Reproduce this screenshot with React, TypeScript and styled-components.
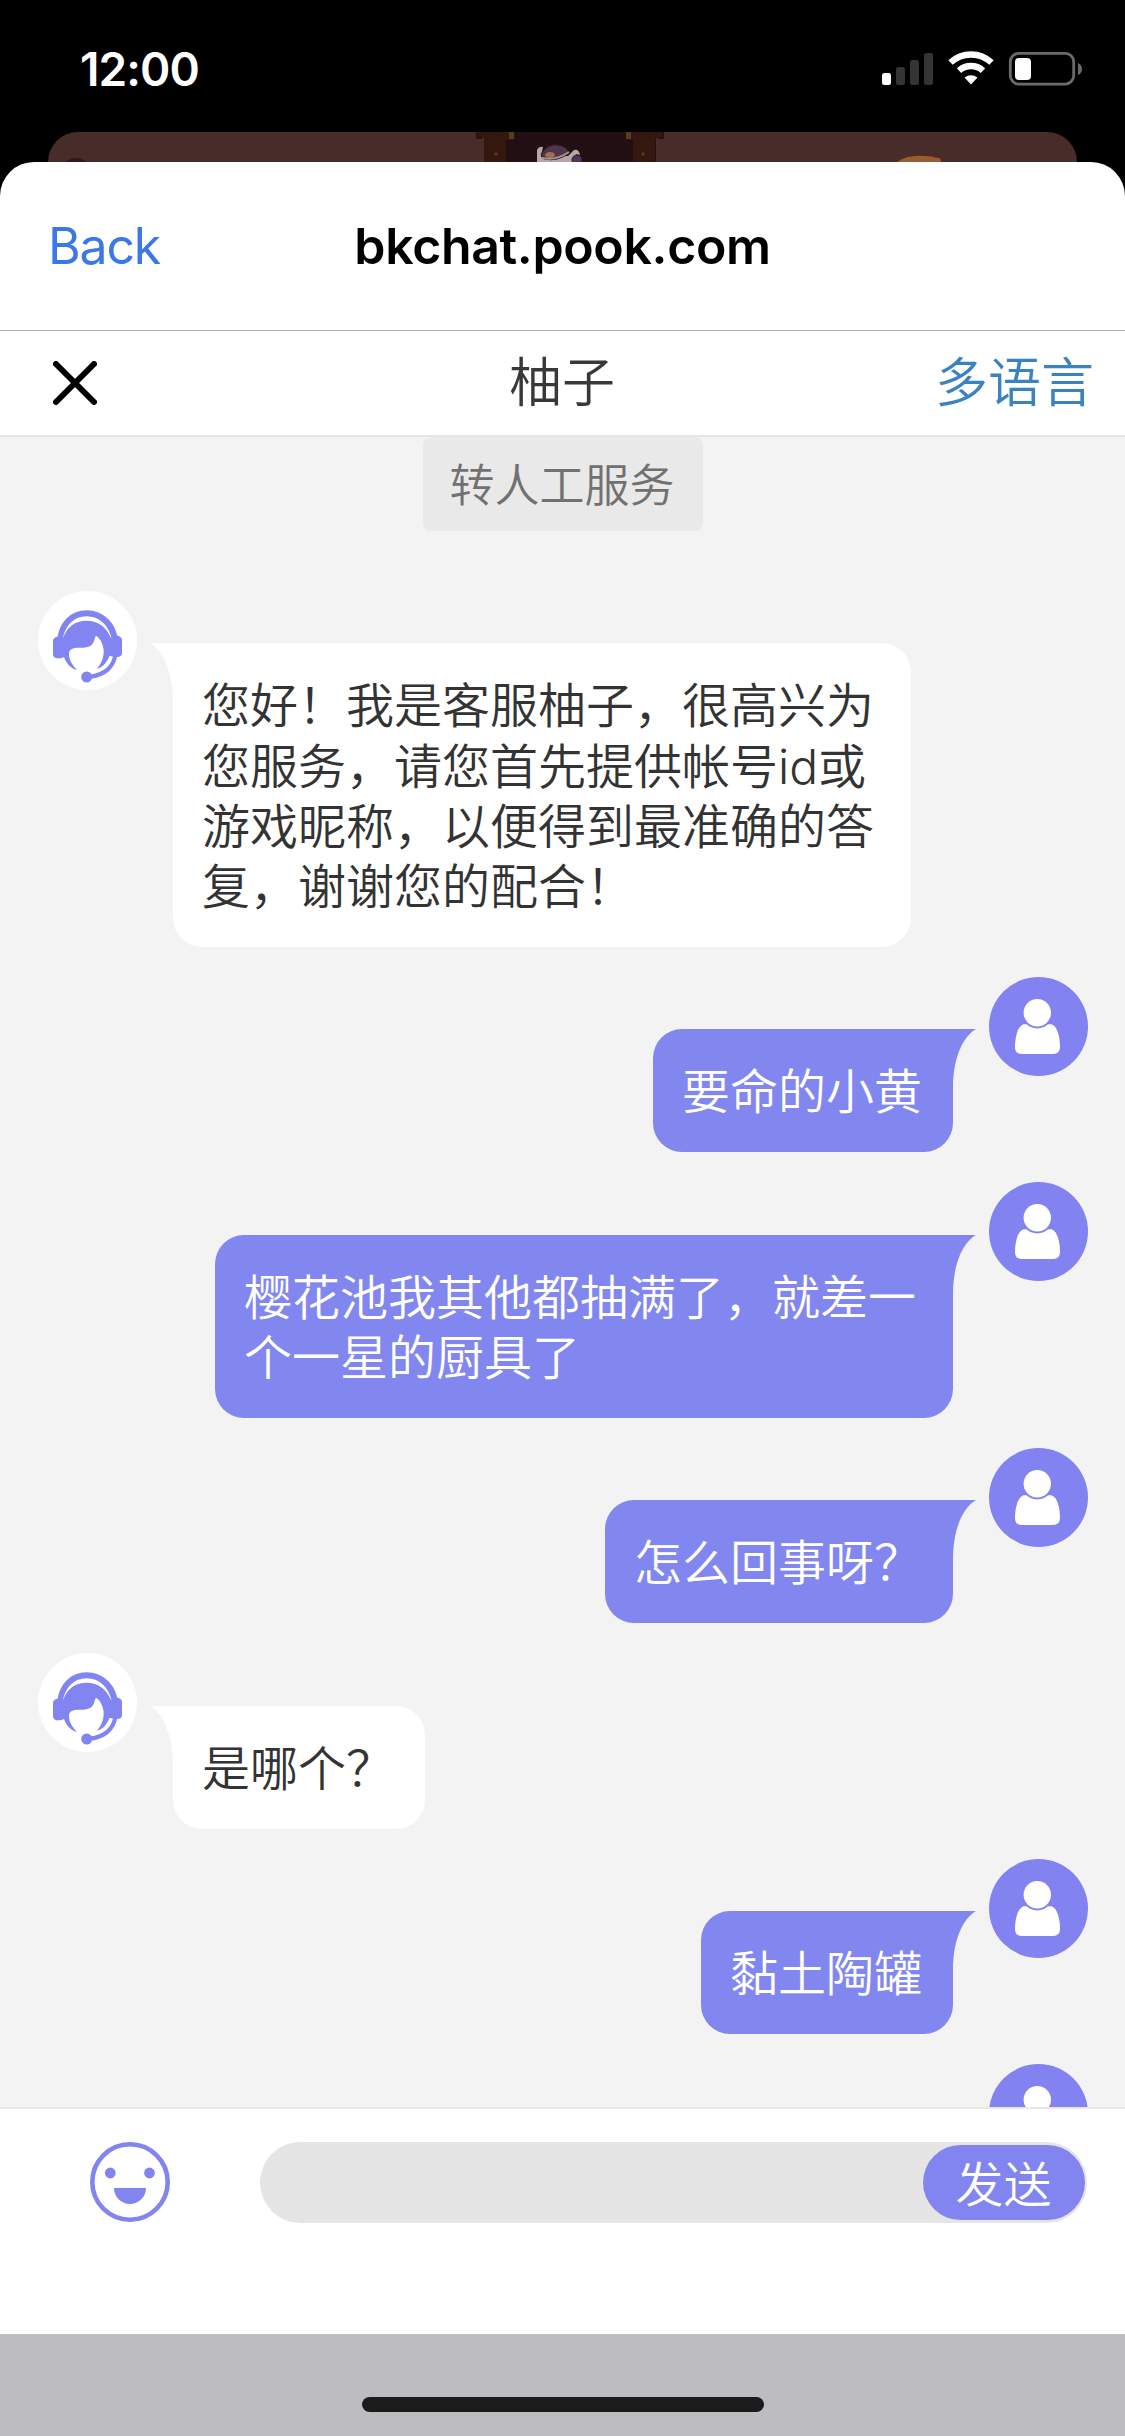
import React from 'react';
import styled, { createGlobalStyle } from 'styled-components';

const ACCENT = '#8287ef';

const GlobalStyle = createGlobalStyle`
  * { box-sizing: border-box; }
  body {
    margin: 0;
    background: #000;
    font-family: Inter, "Noto Sans CJK SC", sans-serif;
  }
`;

const Screen = styled.div`
  width: 1125px;
  height: 2436px;
  overflow: hidden;
  display: flex;
  flex-direction: column;
  background: #000;
`;

const StatusBar = styled.header`
  height: 132px;
  padding: 6px 43px 0 80px;
  display: flex;
  align-items: center;
  justify-content: space-between;
`;

const Clock = styled.span`
  font-size: 46px;
  font-weight: 600;
  line-height: 56px;
  letter-spacing: -0.9px;
  color: #fff;
`;

const StatusIcons = styled.svg`
  display: block;
  width: 202px;
  height: 36px;
`;

const Backdrop = styled.div`
  height: 30px;
  margin: 0 48px;
  border-radius: 30px 30px 0 0;
  background: #482c29;
  overflow: hidden;
`;

const Scene = styled.svg`
  display: block;
  width: 1029px;
  height: 30px;
`;

const Sheet = styled.main`
  flex: 1;
  min-height: 0;
  display: flex;
  flex-direction: column;
  border-radius: 34px 34px 0 0;
  background: #fff;
  overflow: hidden;
`;

const NavBar = styled.nav`
  height: 169px;
  padding: 0 48px;
  display: grid;
  grid-template-columns: 1fr auto 1fr;
  align-items: center;
  border-bottom: 1px solid #acacae;
`;

const BackLink = styled.span`
  font-size: 50px;
  line-height: 60px;
  letter-spacing: -1.2px;
  color: #3b78e7;
`;

const NavTitle = styled.h1`
  margin: 0;
  font-size: 50px;
  font-weight: 600;
  line-height: 60px;
  letter-spacing: -0.35px;
  color: #000;
`;

const ChatHeader = styled.div`
  height: 106px;
  padding: 0 31px 0 53px;
  display: grid;
  grid-template-columns: 1fr auto 1fr;
  align-items: center;
  border-bottom: 2px solid #e6e6e6;
`;

const CloseIcon = styled.svg`
  display: block;
  width: 44px;
  height: 44px;
`;

const ChatTitle = styled.h2`
  margin: 0 0 0 -23px;
  font-size: 53px;
  font-weight: 350;
  line-height: 64px;
  color: #383838;
`;

const LanguageLink = styled.span`
  justify-self: end;
  font-size: 53px;
  font-weight: 350;
  line-height: 64px;
  color: #3a83c0;
`;

const Chat = styled.section`
  flex: 1;
  min-height: 0;
  overflow: hidden;
  padding: 0 37px 0 38px;
  display: flex;
  flex-direction: column;
  background: #f3f3f3;
  border-bottom: 2px solid #e8e8e8;
`;

const TransferButton = styled.button`
  flex: none;
  align-self: center;
  width: 280px;
  height: 94px;
  margin-bottom: 60px;
  padding: 3px 2px 0 0;
  border: 0;
  border-radius: 8px;
  background: #e9e9e9;
  color: #717171;
  font: inherit;
  font-size: 45px;
  font-weight: 350;
  line-height: 60px;
`;

const MessageRow = styled.div<{ $mine: boolean }>`
  flex: none;
  display: flex;
  flex-direction: ${(p) => (p.$mine ? 'row-reverse' : 'row')};
  align-items: flex-start;
  gap: 36px;
  margin-bottom: 30px;
`;

const Avatar = styled.svg`
  flex: none;
  display: block;
  width: 99px;
  height: 99px;
`;

const Bubble = styled.div<{ $mine: boolean }>`
  position: relative;
  max-width: 738px;
  margin-top: 52.4px;
  padding: 33px 31px 29.8px 29px;
  border-radius: ${(p) => (p.$mine ? '29px 0 29px 29px' : '0 29px 29px 29px')};
  background: ${(p) => (p.$mine ? ACCENT : '#fff')};
  color: ${(p) => (p.$mine ? '#fff' : '#333')};
  font-size: 48px;
  font-weight: 350;
  line-height: 60.2px;
`;

const Tail = styled.svg<{ $mine: boolean }>`
  position: absolute;
  top: 0;
  ${(p) => (p.$mine ? 'right: -23px;' : 'left: -23px; transform: scaleX(-1);')}
  width: 24px;
  height: 60px;
`;

const Composer = styled.footer`
  height: 225px;
  padding: 33px 38px 0 90px;
  display: flex;
  align-items: flex-start;
  gap: 90px;
  background: #fff;
`;

const EmojiIcon = styled.svg`
  flex: none;
  display: block;
  width: 80px;
  height: 80px;
`;

const InputPill = styled.div`
  flex: 1;
  height: 81px;
  padding-right: 2px;
  display: flex;
  align-items: center;
  justify-content: flex-end;
  border-radius: 41px;
  background: #e5e5e5;
`;

const SendButton = styled.button`
  width: 162px;
  height: 75px;
  padding: 5px 1px 0 0;
  border: 0;
  border-radius: 38px;
  background: #8285f0;
  color: #fff;
  font: inherit;
  font-size: 48px;
  font-weight: 350;
  line-height: 60px;
`;

const HomeArea = styled.div`
  height: 102px;
  padding-top: 63px;
  display: flex;
  justify-content: center;
  background: #bdbcc1;
`;

const HomeIndicator = styled.div`
  width: 402px;
  height: 15px;
  border-radius: 8px;
  background: #1b1b1b;
`;

const AgentAvatar = () => (
  <Avatar viewBox="0 0 99 99">
    <circle cx="49.5" cy="49.5" r="49.5" fill="#fff" />
    <g fill="#8284f2">
      <path d="M19.500 48C21 31 33 19.300 48.700 19.300S77 31 79.500 46L74 49C71 34 61 25.300 48.700 25.300S27 34 24.500 49Z" />
      <path d="M20.500 45.500 25 47C29 36 37 29.700 48.500 29.700S68.500 36 73 47L79 44.500Q84 45.500 84 49V62Q84 65.500 80 66L71.500 65C69 71 65 76.500 59 77.700C63 73 66 67 65.700 59C65 53 62 47 58.500 45C56 45 57.500 51 53 54.500C46 59 36 54 31.500 60C29.500 66 33.500 73.500 39 79C32.500 77.500 28 72 26 66C23 67.500 15 69 15 63V50Q15 46 20.500 45.500Z" />
      <circle cx="48.700" cy="86" r="5.500" />
    </g>
    <path d="M77.200 64.500C75.500 75.500 67 84 52 85.700" fill="none" stroke="#8284f2" strokeWidth="4.200" />
  </Avatar>
);

const UserAvatar = () => (
  <Avatar viewBox="0 0 99 99">
    <circle cx="49.5" cy="49.5" r="49.5" fill="#8283f0" />
    <path
      d="M34.500 47.300H62.500C68.500 49.500 71 60 71 70Q71 77 64 77H33Q26 77 26 70C26 60 28.500 49.500 34.500 47.300Z"
      fill="#fff"
    />
    <circle cx="48.300" cy="35.700" r="15.800" fill="#8283f0" />
    <circle cx="48.300" cy="35.700" r="13.700" fill="#fff" />
  </Avatar>
);

type Message = { mine: boolean; text: string };

const messages: Message[] = [
  {
    mine: false,
    text: '您好！我是客服柚子，很高兴为您服务，请您首先提供帐号id或游戏昵称，以便得到最准确的答复，谢谢您的配合！',
  },
  { mine: true, text: '要命的小黄' },
  { mine: true, text: '樱花池我其他都抽满了，就差一个一星的厨具了' },
  { mine: true, text: '怎么回事呀？' },
  { mine: false, text: '是哪个？' },
  { mine: true, text: '黏土陶罐' },
];

const MessageItem = ({ mine, text }: Message) => (
  <MessageRow $mine={mine}>
    {mine ? <UserAvatar /> : <AgentAvatar />}
    <Bubble $mine={mine}>
      <Tail $mine={mine} viewBox="0 0 24 60">
        <path d="M0 0H24C15 5 1 22 1 60H0Z" fill={mine ? ACCENT : '#fff'} />
      </Tail>
      {text}
    </Bubble>
  </MessageRow>
);

export default function App() {
  return (
    <Screen lang="zh-CN">
      <GlobalStyle />
      <StatusBar>
        <Clock>12:00</Clock>
        <StatusIcons viewBox="0 0 202 36">
          <rect x="2" y="22" width="9" height="12" rx="2.500" fill="#fff" />
          <g fill="#343434">
            <rect x="16" y="16" width="9" height="18" rx="2.500" />
            <rect x="30" y="9" width="9" height="25" rx="2.500" />
            <rect x="44" y="2" width="9" height="32" rx="2.500" />
          </g>
          <g fill="none" stroke="#fff" strokeWidth="6.500">
            <path d="M70.500 11.500A30 30 0 0 1 111.500 11.500" />
            <path d="M79 19.700A18 18 0 0 1 103 19.700" />
          </g>
          <path d="M84.500 26.500Q91 21.800 97.500 26.500L91 33.500Z" fill="#fff" />
          <rect x="130.300" y="2.300" width="63.400" height="30.800" rx="8.500" fill="none" stroke="#6b6b6b" strokeWidth="2.800" />
          <rect x="135" y="7" width="16" height="22" rx="4" fill="#fff" />
          <path d="M198 12Q202 14 202 18T198 24Z" fill="#6b6b6b" />
        </StatusIcons>
      </StatusBar>
      <Backdrop>
        <Scene viewBox="0 0 1029 30">
          <path d="M17 30Q28 22 39 30Z" fill="#30191a" />
          <rect x="436" width="172" height="30" fill="#210f14" />
          <path d="M428 0H466V8H458V30H436V6H428Z" fill="#34180f" />
          <path d="M578 0H616V6H607V30H585V8H578Z" fill="#34180f" />
          <path d="M461 0H466V7H461ZM578 0H583V7H578Z" fill="#5a3a20" />
          <path d="M429 0V6H434M615 0V6H610" fill="none" stroke="#2b1112" strokeWidth="2" />
          <circle cx="448" cy="22" r="1.800" fill="#573629" />
          <circle cx="595" cy="22" r="1.800" fill="#573629" />
          <path d="M489 30V18Q491 14 495 15L493 25 520 24 526 18Q531 17 532 23L528 22 532 30Z" fill="#b7a7a4" />
          <path d="M493 22Q500 11 510 13Q519 14 521 21Q510 30 496 27Z" fill="#50354a" stroke="#2c1724" />
          <ellipse cx="502" cy="23" rx="5" ry="3" fill="#a17050" />
          <path d="M494 26Q508 29 521 20" fill="none" stroke="#a4928f" strokeWidth="2" />
          <circle cx="529" cy="28" r="5" fill="#483958" stroke="#2c1d31" />
          <path d="M847 31Q855 23 872 23Q882 23 888 25Q894 24 894 31Z" fill="#995d32" stroke="#57271a" strokeWidth="1.500" />
        </Scene>
      </Backdrop>
      <Sheet>
        <NavBar>
          <BackLink>Back</BackLink>
          <NavTitle>bkchat.pook.com</NavTitle>
        </NavBar>
        <ChatHeader>
          <CloseIcon viewBox="0 0 44 44">
            <path d="M3 3 41 41M41 3 3 41" stroke="#000" strokeWidth="6" strokeLinecap="round" />
          </CloseIcon>
          <ChatTitle>柚子</ChatTitle>
          <LanguageLink>多语言</LanguageLink>
        </ChatHeader>
        <Chat>
          <TransferButton>转人工服务</TransferButton>
          {messages.map((m) => (
            <MessageItem key={m.text} {...m} />
          ))}
          <MessageRow $mine>
            <UserAvatar />
          </MessageRow>
        </Chat>
        <Composer>
          <EmojiIcon viewBox="0 0 80 80" fill="#8284ef">
            <circle cx="40" cy="40" r="37.700" fill="none" stroke="#8284ef" strokeWidth="4.600" />
            <circle cx="20.300" cy="31" r="5.400" />
            <circle cx="59.500" cy="31" r="5.400" />
            <path d="M24 46H56A16 16 0 0 1 24 46Z" />
          </EmojiIcon>
          <InputPill>
            <SendButton>发送</SendButton>
          </InputPill>
        </Composer>
        <HomeArea>
          <HomeIndicator />
        </HomeArea>
      </Sheet>
    </Screen>
  );
}
